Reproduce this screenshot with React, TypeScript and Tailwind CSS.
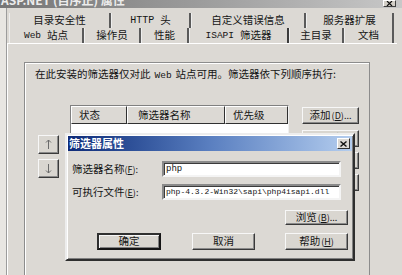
import React from "react";

const cjk = "font-['SimSun','Noto_Sans_CJK_SC','Noto_Sans',sans-serif]";
const mono = "font-['Liberation_Mono','Courier_New',monospace]";

function Btn({
  children,
  className = "",
  def = false,
}: {
  children?: React.ReactNode;
  className?: string;
  def?: boolean;
}) {
  return (
    <div
      className={
        "flex items-center justify-center bg-[#d9d6d0] text-[10.5px] leading-none text-[#151515] " +
        (def
          ? "border-2 border-t-[#303030] border-l-[#303030] border-r-[#151515] border-b-[#151515] shadow-[inset_1px_1px_0_#f6f6f6,inset_-1px_-1px_0_#808080] "
          : "border border-t-[#f7f7f7] border-l-[#f7f7f7] border-r-[#3a3a3a] border-b-[#3a3a3a] shadow-[inset_-1px_-1px_0_#8a8a8a] ") +
        className
      }
    >
      {children}
    </div>
  );
}

function Tab({
  w,
  children,
  sel = false,
}: {
  w: string;
  children: React.ReactNode;
  sel?: boolean;
}) {
  return (
    <div
      className={
        "h-full flex items-center justify-center text-[10.5px] leading-none text-[#151515] border-l border-l-[#eeeeee] " +
        (sel
          ? "border-r-2 border-r-[#3c3c3c] relative z-10 "
          : "border-r-2 border-r-[#5a5a5a] ") +
        w
      }
    >
      {children}
    </div>
  );
}

function Sunken({
  children,
  className = "",
}: {
  children?: React.ReactNode;
  className?: string;
}) {
  return (
    <div
      className={
        "bg-white border-2 border-t-[#8a8a8a] border-l-[#8a8a8a] border-r-[#f4f4f4] border-b-[#f4f4f4] shadow-[inset_1px_1px_0_#3a3a3a] flex items-center pl-[2px] overflow-hidden " +
        className
      }
    >
      {children}
    </div>
  );
}

function Arrow({ up }: { up: boolean }) {
  return (
    <svg width="7" height="11" viewBox="0 0 7 11">
      {up ? (
        <path d="M3.5 1 V10 M1 3.5 L3.5 1 L6 3.5" stroke="#6a6a6a" strokeWidth="1" fill="none" />
      ) : (
        <path d="M3.5 1 V10 M1 7.5 L3.5 10 L6 7.5" stroke="#6a6a6a" strokeWidth="1" fill="none" />
      )}
    </svg>
  );
}

export default function App() {
  return (
    <div
      className={
        "w-[402px] h-[275px] overflow-hidden bg-[#dcd9d4] flex flex-col relative text-[#151515] " +
        cjk
      }
    >
      {/* outer window title bar (cut off) */}
      <div className="h-[8px] shrink-0 bg-gradient-to-r from-[#767676] via-[#9c9c9c] to-[#c8c8c8] overflow-hidden flex items-start">
        <span className="text-[12px] font-bold text-[#ececec] leading-[12px] -mt-[6px] ml-[1px] whitespace-nowrap">
          ASP.NET (自序正) 属性
        </span>
        <div className="ml-auto mr-[6px] w-[13px] h-[7px] bg-[#d4d0c8] border border-t-white border-l-white border-r-[#404040] border-b-[#404040] flex items-start justify-center overflow-hidden">
          <svg width="7" height="5" viewBox="0 0 7 5">
            <path d="M1 0 L6 5 M6 0 L1 5" stroke="#111" strokeWidth="1.2" />
          </svg>
        </div>
      </div>

      <div className="flex-1 flex min-h-0">
        <div className="w-[7px] shrink-0 bg-[#e8e6e2] border-r border-r-[#9c9c9c]" />
        <div className="flex-1 flex flex-col pt-[5px] min-w-0">
          {/* tab row 1 */}
          <div className="flex h-[15px] pl-[2px] shrink-0">
            <Tab w="w-[102px]">目录安全性</Tab>
            <Tab w="w-[80px]">
              <span className={mono + " text-[10px] mr-[6px]"}>HTTP</span>头
            </Tab>
            <Tab w="w-[115px]">自定义错误信息</Tab>
            <Tab w="w-[88px]">服务器扩展</Tab>
          </div>
          {/* tab row 2 */}
          <div className="flex h-[15px] pl-[2px] shrink-0">
            <Tab w="w-[75px]">
              <span className={mono + " text-[9.5px] mr-[6px]"}>Web</span>站点
            </Tab>
            <Tab w="w-[57px]">操作员</Tab>
            <Tab w="w-[48px]">性能</Tab>
            <Tab w="w-[100px]" sel>
              <span className={mono + " text-[9.5px] mr-[6px]"}>ISAPI</span>筛选器
            </Tab>
            <Tab w="w-[55px]">主目录</Tab>
            <Tab w="w-[50px]">文档</Tab>
          </div>

          {/* tab page */}
          <div className="flex-1 border-l border-t border-l-white border-t-white mr-[5px] pl-[16px] pt-[18px] min-h-0">
            {/* group box */}
            <div className="w-[346px] h-[260px] border border-[#8c8c8c] shadow-[inset_1px_1px_0_#ffffff] pt-[5px] pl-[10px]">
              <div className="text-[10.5px] leading-[12px] whitespace-nowrap">
                在此安装的筛选器仅对此
                <span className={mono + " text-[9.5px] mx-[4px]"}>Web</span>
                站点可用。筛选器依下列顺序执行:
              </div>
              <div className="flex items-start mt-[23px]">
                {/* up/down */}
                <div className="ml-[3px] mt-[30px] w-[21px] flex flex-col gap-[5px]">
                  <Btn className="h-[19px]">
                    <Arrow up />
                  </Btn>
                  <Btn className="h-[19px]">
                    <Arrow up={false} />
                  </Btn>
                </div>
                {/* list */}
                <div className="ml-[11px] w-[219px] h-[140px] bg-white border border-t-[#808080] border-l-[#808080] border-r-[#f0f0f0] border-b-[#f0f0f0] flex flex-col">
                  <div className="h-[18px] flex text-[10.5px] leading-none shrink-0">
                    <div className="w-[56px] bg-[#dcd9d4] border border-t-white border-l-white border-r-[#303030] border-b-[#303030] flex items-center pl-[7px]">
                      状态
                    </div>
                    <div className="w-[98px] bg-[#dcd9d4] border border-t-white border-l-white border-r-[#303030] border-b-[#303030] flex items-center pl-[10px]">
                      筛选器名称
                    </div>
                    <div className="flex-1 bg-[#dcd9d4] border border-t-white border-l-white border-r-[#303030] border-b-[#303030] flex items-center pl-[7px]">
                      优先级
                    </div>
                  </div>
                </div>
                {/* right buttons */}
                <div className="ml-[13px] mt-[2px] w-[57px] flex flex-col">
                  <Btn className="h-[17px]">
                    添加
                    <span className="text-[9px] ml-[1px]">
                      (<u>D</u>)...
                    </span>
                  </Btn>
                  <Btn className="h-[17px] mt-[6px]">删除</Btn>
                  <Btn className="h-[17px] mt-[5px]">编辑</Btn>
                  <Btn className="h-[17px] mt-[5px]">启用</Btn>
                </div>
              </div>
            </div>
          </div>
        </div>
      </div>

      {/* filter properties dialog */}
      <div className="absolute left-[65px] top-[133px] w-[290px] h-[128px] bg-[#dcd9d4] border-2 border-t-[#ededed] border-l-[#ededed] border-r-[#2e2e2e] border-b-[#2e2e2e] shadow-[inset_1px_1px_0_#ffffff,inset_-1px_-1px_0_#808080] p-[1px] flex flex-col">
        <div className="h-[15px] shrink-0 bg-gradient-to-r from-[#0e2a78] via-[#5a7fc0] to-[#b4cdee] flex items-center pl-[1px] pr-[2px]">
          <span className="text-[11px] font-bold text-white leading-none whitespace-nowrap">
            筛选器属性
          </span>
          <div className="ml-auto w-[13px] h-[11px] bg-[#dcd9d4] border border-t-white border-l-white border-r-[#303030] border-b-[#303030] flex items-center justify-center">
            <svg width="7" height="6" viewBox="0 0 7 6">
              <path d="M0.5 0.5 L6.5 5.5 M6.5 0.5 L0.5 5.5" stroke="#111" strokeWidth="1.4" />
            </svg>
          </div>
        </div>
        <div className="flex-1 pl-[4px] pt-[10px] flex flex-col">
          <div className="flex items-center h-[16px]">
            <div className="w-[90px] text-[10.5px] leading-none whitespace-nowrap">
              筛选器名称
              <span className="text-[9px]">
                (<u>F</u>):
              </span>
            </div>
            <Sunken className="w-[179px] h-[16px]">
              <span className={mono + " text-[9px] leading-none"}>php</span>
            </Sunken>
          </div>
          <div className="flex items-center h-[16px] mt-[7px]">
            <div className="w-[90px] text-[10.5px] leading-none whitespace-nowrap">
              可执行文件
              <span className="text-[9px]">
                (<u>E</u>):
              </span>
            </div>
            <Sunken className="w-[179px] h-[16px]">
              <span className={mono + " text-[8px] leading-none whitespace-nowrap"}>
                php-4.3.2-Win32\sapi\php4isapi.dll
              </span>
            </Sunken>
          </div>
          <div className="flex mt-[10px]">
            <Btn className="h-[15px] w-[63px] ml-[213px]">
              浏览
              <span className="text-[9px] ml-[1px]">
                (<u>B</u>)...
              </span>
            </Btn>
          </div>
          <div className="flex mt-[8px]">
            <Btn def className="h-[17px] w-[64px] ml-[25px]">
              确定
            </Btn>
            <Btn className="h-[17px] w-[63px] ml-[31px]">取消</Btn>
            <Btn className="h-[17px] w-[63px] ml-[30px]">
              帮助
              <span className="text-[9px] ml-[1px]">
                (<u>H</u>)
              </span>
            </Btn>
          </div>
        </div>
      </div>
    </div>
  );
}
